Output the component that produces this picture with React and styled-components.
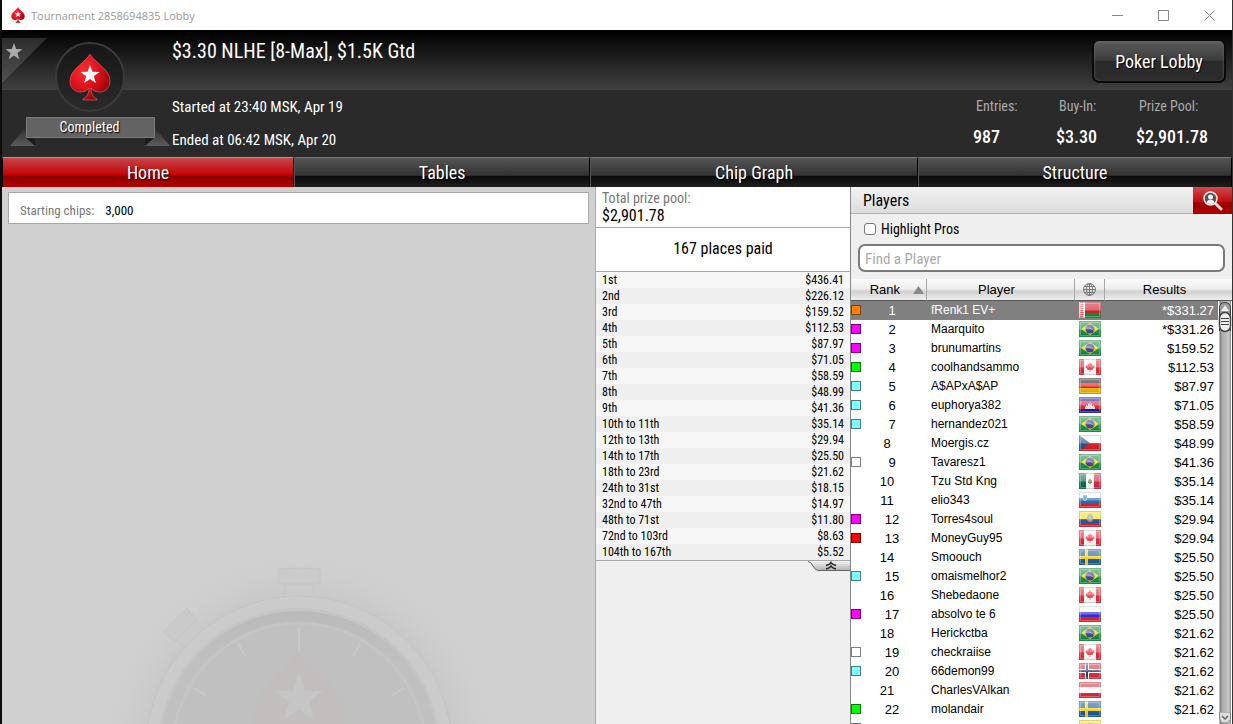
import React, { useState } from "react";
import styled, { createGlobalStyle } from "styled-components";

const prizes = [
  ["1st", "$436.41"],
  ["2nd", "$226.12"],
  ["3rd", "$159.52"],
  ["4th", "$112.53"],
  ["5th", "$87.97"],
  ["6th", "$71.05"],
  ["7th", "$58.59"],
  ["8th", "$48.99"],
  ["9th", "$41.36"],
  ["10th to 11th", "$35.14"],
  ["12th to 13th", "$29.94"],
  ["14th to 17th", "$25.50"],
  ["18th to 23rd", "$21.62"],
  ["24th to 31st", "$18.15"],
  ["32nd to 47th", "$14.97"],
  ["48th to 71st", "$11.80"],
  ["72nd to 103rd", "$8.63"],
  ["104th to 167th", "$5.52"],
];

const ORANGE = "#ff8000";
const PINK = "#ff00ff";
const GREEN = "#00ff00";
const CYAN = "#80ffff";
const RED = "#ff0000";
const WHITE = "#ffffff";

const players = [
  { rank: 1, name: "fRenk1 EV+", flag: "by", result: "*$331.27", tag: ORANGE },
  { rank: 2, name: "Maarquito", flag: "br", result: "*$331.26", tag: PINK },
  { rank: 3, name: "brunumartins", flag: "br", result: "$159.52", tag: PINK },
  { rank: 4, name: "coolhandsammo", flag: "ca", result: "$112.53", tag: GREEN },
  { rank: 5, name: "A$APxA$AP", flag: "de", result: "$87.97", tag: CYAN },
  { rank: 6, name: "euphorya382", flag: "kh", result: "$71.05", tag: CYAN },
  { rank: 7, name: "hernandez021", flag: "br", result: "$58.59", tag: CYAN },
  { rank: 8, name: "Moergis.cz", flag: "cz", result: "$48.99" },
  { rank: 9, name: "Tavaresz1", flag: "br", result: "$41.36", tag: WHITE },
  { rank: 10, name: "Tzu Std Kng", flag: "mx", result: "$35.14" },
  { rank: 11, name: "elio343", flag: "si", result: "$35.14" },
  { rank: 12, name: "Torres4soul", flag: "ec", result: "$29.94", tag: PINK },
  { rank: 13, name: "MoneyGuy95", flag: "ca", result: "$29.94", tag: RED },
  { rank: 14, name: "Smoouch", flag: "se", result: "$25.50" },
  { rank: 15, name: "omaismelhor2", flag: "br", result: "$25.50", tag: CYAN },
  { rank: 16, name: "Shebedaone", flag: "ca", result: "$25.50" },
  { rank: 17, name: "absolvo te 6", flag: "ru", result: "$25.50", tag: PINK },
  { rank: 18, name: "Herickctba", flag: "br", result: "$21.62" },
  { rank: 19, name: "checkraiise", flag: "ca", result: "$21.62", tag: WHITE },
  { rank: 20, name: "66demon99", flag: "no", result: "$21.62", tag: CYAN },
  { rank: 21, name: "CharlesVAlkan", flag: "at", result: "$21.62" },
  { rank: 22, name: "molandair", flag: "se", result: "$21.62", tag: GREEN },
  { rank: 23, flag: "ec", tag: CYAN },
];

const tabs = [
  { label: "Home", grow: 292 },
  { label: "Tables", grow: 296 },
  { label: "Chip Graph", grow: 328 },
  { label: "Structure", grow: 314 },
];

const stats = [
  { label: "Entries:", value: "987" },
  { label: "Buy-In:", value: "$3.30" },
  { label: "Prize Pool:", value: "$2,901.78" },
];

const STAR = "M0-10 2.4-3.2 9.5-3.1 3.8 1.2 5.9 8.1 0 4-5.9 8.1-3.8 1.2-9.5-3.1-2.4-3.2Z";

const flagArt = {
  by: (
    <>
      <path fill="#c81420" d="M0 0h22v11H0z" />
      <path fill="#0a8a20" d="M0 11h22v5H0z" />
      <path fill="#fff" d="M0 0h6v16H0z" />
      <path stroke="#e0505a" strokeWidth="3" strokeDasharray="1.5 .5" d="M2.5 0v16" />
      <path stroke="#f0a0a4" strokeWidth="1" strokeDasharray="1 1" d="M4.5 0v16" />
    </>
  ),
  br: (
    <>
      <path fill="#0a8a3c" d="M0 0h22v16H0z" />
      <path fill="#f5d20f" d="M11 2l9 6-9 6-9-6z" />
      <circle cx="11" cy="8" r="4.5" fill="#3c3c8c" />
      <path stroke="#8a8cc0" fill="none" d="M7 7q4-1 8 2.5" />
    </>
  ),
  ca: (
    <>
      <path fill="#fff" d="M0 0h22v16H0z" />
      <path fill="#e0202e" d="M0 0h5v16H0zM17 0h5v16h-5z" />
      <path
        fill="#f0303c"
        d="M11 3l1 2 1.500-.5-.3 2.300 2.300-.8-.5 1.500 1 .5-2.500 2 .3 1-2.500-.3V13h-.6v-2.300l-2.500.3.3-1L6 8l1-.5L6.500 6l2.300.8-.3-2.300L10 5Z"
      />
    </>
  ),
  de: (
    <>
      <path fill="#111" d="M0 0h22v5H0z" />
      <path fill="#e81414" d="M0 5h22v5H0z" />
      <path fill="#e8b400" d="M0 10h22v6H0z" />
    </>
  ),
  kh: (
    <>
      <path fill="#10109a" d="M0 0h22v16H0z" />
      <path fill="#de2030" d="M0 4h22v8H0z" />
      <path fill="#f8dce0" d="M6 12V9.500h1V8h1v1h1V6.500h1V8h.5V5.500h1V8h.5V6.500h1V9h1V8h1v1.500h1V12z" />
    </>
  ),
  cz: (
    <>
      <path fill="#fff" d="M0 0h22v8H0z" />
      <path fill="#d8141e" d="M0 8h22v8H0z" />
      <path fill="#1d4a80" d="M0 0l11 8-11 8z" />
    </>
  ),
  mx: (
    <>
      <path fill="#fff" d="M0 0h22v16H0z" />
      <path fill="#00684a" d="M0 0h7v16H0z" />
      <path fill="#cf1f38" d="M15 0h7v16h-7z" />
      <circle cx="11" cy="8" r="2" fill="#8f7b52" />
      <path stroke="#5a8a50" fill="none" d="M9 9q2 3 4 0" />
    </>
  ),
  si: (
    <>
      <path fill="#fff" d="M0 0h22v6H0z" />
      <path fill="#1765ad" d="M0 6h22v5H0z" />
      <path fill="#e2141e" d="M0 11h22v5H0z" />
      <path fill="#3c7fc0" stroke="#fff" strokeWidth=".5" d="M4 3h4v3q0 2-2 3-2-1-2-3z" />
    </>
  ),
  ec: (
    <>
      <path fill="#f5dc14" d="M0 0h22v8H0z" />
      <path fill="#1c4f9c" d="M0 8h22v4H0z" />
      <path fill="#dc1420" d="M0 12h22v4H0z" />
      <ellipse cx="11" cy="7" rx="3" ry="4" fill="#a09a70" />
      <circle cx="11" cy="7" r="1.5" fill="#7fc0d8" />
    </>
  ),
  se: (
    <>
      <path fill="#0f5796" d="M0 0h22v16H0z" />
      <path fill="#f7cc10" d="M6 0h3v16H6zM0 7h22v3H0z" />
    </>
  ),
  ru: (
    <>
      <path fill="#fff" d="M0 0h22v6H0z" />
      <path fill="#2020e0" d="M0 6h22v5H0z" />
      <path fill="#f01414" d="M0 11h22v5H0z" />
    </>
  ),
  no: (
    <>
      <path fill="#dd2434" d="M0 0h22v16H0z" />
      <path fill="#fff" d="M6 0h4v16H6zM0 6h22v4H0z" />
      <path fill="#1d3a6c" d="M7 0h2v16H7zM0 7h22v2H0z" />
    </>
  ),
  at: (
    <>
      <path fill="#dc2430" d="M0 0h22v16H0z" />
      <path fill="#fff" d="M0 5h22v6H0z" />
    </>
  ),
};

function Flag({ code }) {
  return (
    <FlagSvg viewBox="0 0 22 16">
      <defs>
        <linearGradient id="gloss" x2="0" y2="1">
          <stop offset="0" stopColor="#fff" stopOpacity=".5" />
          <stop offset=".5" stopColor="#fff" stopOpacity=".36" />
          <stop offset=".56" stopColor="#fff" stopOpacity=".06" />
          <stop offset="1" stopColor="#000" stopOpacity=".1" />
        </linearGradient>
      </defs>
      {flagArt[code]}
      <path fill="url(#gloss)" d="M0 0h22v16H0z" />
      <path fill="none" stroke="#fff" strokeOpacity=".28" d="M1.5 1.5h19v13h-19z" />
      <path fill="none" stroke="#888" strokeOpacity=".28" d="M.5.5h21v15H.5z" />
    </FlagSvg>
  );
}

function Spade({ width, height }) {
  return (
    <svg width={width} height={height} viewBox="0 0 42 48">
      <defs>
        <radialGradient id="spadeRed" cx=".35" cy=".35" r=".75">
          <stop offset="0" stopColor="#ff2c32" />
          <stop offset=".5" stopColor="#dc141e" />
          <stop offset="1" stopColor="#8c0008" />
        </radialGradient>
      </defs>
      <path
        fill="url(#spadeRed)"
        stroke="#f06a6a"
        strokeWidth=".6"
        d="M21 1C17 9 1 16 1 28c0 7 5 11 10 11 4 0 7-1 9-4 0 6-2 9-6 11v1h14v-1c-4-2-6-5-6-11 2 3 5 4 9 4 5 0 10-4 10-11C41 16 25 9 21 1Z"
      />
      <path fill="#fff" d={STAR} transform="translate(21 22)" />
    </svg>
  );
}

function StopWatch() {
  const ticks = [-60, -30, 0, 30, 60];
  return (
    <WatchSvg viewBox="98 534 400 190" aria-hidden="true">
      <defs>
        <radialGradient id="watchHalo" cx="298" cy="749" r="200" gradientUnits="userSpaceOnUse">
          <stop offset=".76" stopColor="#c8c8c8" />
          <stop offset="1" stopColor="#d0d0d0" stopOpacity="0" />
        </radialGradient>
        <linearGradient id="watchFace" x2="0" y2="1">
          <stop offset="0" stopColor="#bababa" />
          <stop offset=".2" stopColor="#c0c0c0" />
        </linearGradient>
      </defs>
      <circle cx="298" cy="749" r="200" fill="url(#watchHalo)" />
      <path fill="#cacaca" stroke="#c5c5c5" d="M284 584h28v13h-28zM277 569q21-2 42 0v15h-42z" />
      <path fill="#cacaca" stroke="#c5c5c5" d="M175 640l20-19 9 10-18 18zM162 632l24-24 9 11-21 23z" />
      <circle cx="298" cy="749" r="153" fill="#cbcbcb" stroke="#c4c4c4" />
      <circle cx="298" cy="749" r="141" fill="#c5c5c5" />
      <circle cx="298" cy="749" r="138" fill="url(#watchFace)" />
      <circle cx="298" cy="749" r="126" fill="#c0c0c0" stroke="#c4c4c4" strokeWidth="3" />
      {ticks.map((deg) => (
        <path
          key={deg}
          stroke="#c7c7c7"
          strokeWidth="2"
          d={deg === 0 ? "M298 627v24" : "M298 627v14"}
          transform={`rotate(${deg} 298 749)`}
        />
      ))}
      <path fill="#c1bebd" d="M298 651c-8 18-45 36-45 64v14h91v-14c0-28-37-46-46-64Z" />
      <path fill="#c5c5c5" d={STAR} transform="translate(298 699) scale(2.6)" />
    </WatchSvg>
  );
}

function App() {
  const [tab, setTab] = useState("Home");
  const [selected, setSelected] = useState(1);
  const [pros, setPros] = useState(false);
  const [query, setQuery] = useState("");

  return (
    <>
      <GlobalStyle />
      <Window>
        <TitleBar>
          <Spade width={14} height={16} />
          <WindowTitle>Tournament 2858694835 Lobby</WindowTitle>
          <WindowButton aria-label="Minimize">
            <svg width="11" height="11" stroke="#888" fill="none">
              <path d="M0 5.5h11" />
            </svg>
          </WindowButton>
          <WindowButton aria-label="Maximize">
            <svg width="11" height="11" stroke="#888" fill="none">
              <path d="M.5.5h10v10H.5z" />
            </svg>
          </WindowButton>
          <WindowButton aria-label="Close">
            <svg width="11" height="11" stroke="#888" fill="none">
              <path d="M.5.5l10 10M10.500.5l-10 10" />
            </svg>
          </WindowButton>
        </TitleBar>

        <Header>
          <Corner aria-label="Favourite">
            <svg width="46" height="46">
              <defs>
                <linearGradient id="corner" x2="0" y2="1">
                  <stop offset="0" stopColor="#2c2c2c" />
                  <stop offset="1" stopColor="#525252" />
                </linearGradient>
              </defs>
              <path fill="url(#corner)" d="M0 0h45L0 45z" />
              <path fill="#aaa" d={STAR} transform="translate(12 14) scale(.9)" />
            </svg>
          </Corner>
          <Badge>
            <Emblem>
              <Spade width={42} height={48} />
            </Emblem>
            <Ribbon>
              <RibbonSvg viewBox="0 0 162 30">
                <defs>
                  <linearGradient id="fold" x2="0" y2="1">
                    <stop offset="0" stopColor="#2b2b2b" />
                    <stop offset="1" stopColor="#5c5c5c" />
                  </linearGradient>
                </defs>
                <path fill="url(#fold)" d="M17 10v11h9v8H1zM145 10v11h-9v8h25z" />
                <path fill="#1c1c1c" d="M17 21h9v8zM145 21h-9v8z" />
                <path fill="#636363" stroke="#7c7c7c" d="M17.500.5h128v20h-128z" />
              </RibbonSvg>
              <RibbonText>Completed</RibbonText>
            </Ribbon>
          </Badge>
          <Info>
            <Title>$3.30 NLHE [8-Max], $1.5K Gtd</Title>
            <Time>Started at 23:40 MSK, Apr 19</Time>
            <Time>Ended at 06:42 MSK, Apr 20</Time>
          </Info>
          <HeaderSide>
            <LobbyButton>Poker Lobby</LobbyButton>
            <Stats>
              {stats.map((s) => (
                <Stat key={s.label}>
                  <dt>{s.label}</dt>
                  <dd>{s.value}</dd>
                </Stat>
              ))}
            </Stats>
          </HeaderSide>
        </Header>

        <TabBar>
          {tabs.map((t) => (
            <Tab key={t.label} $grow={t.grow} $active={tab === t.label} onClick={() => setTab(t.label)}>
              {t.label}
            </Tab>
          ))}
        </TabBar>

        <Content>
          <HomePanel>
            <ChipsBox>
              <span>Starting chips:</span>
              <b>3,000</b>
            </ChipsBox>
            <StopWatch />
          </HomePanel>

          <PrizePanel>
            <PrizeTotal>
              <span>Total prize pool:</span>
              <strong>$2,901.78</strong>
            </PrizeTotal>
            <PlacesPaid>167 places paid</PlacesPaid>
            <PrizeTable>
              <tbody>
                {prizes.map(([place, amount]) => (
                  <tr key={place}>
                    <td>{place}</td>
                    <td>{amount}</td>
                  </tr>
                ))}
              </tbody>
            </PrizeTable>
            <Collapse aria-label="Collapse prizes">
              <svg width="42" height="10">
                <defs>
                  <linearGradient id="collapse" x2="0" y2="1">
                    <stop offset="0" stopColor="#f4f4f4" />
                    <stop offset="1" stopColor="#b4b4b4" />
                  </linearGradient>
                </defs>
                <path fill="url(#collapse)" d="M0 0q3 0 5 5 2 4 5 4h32V0z" />
                <path fill="none" stroke="#666" d="M0 .5q3 0 5 4.500 2 4.500 5 4.500h32" />
                <path fill="none" stroke="#222" strokeWidth="1.5" d="M18 4.500q4-1 5-3 1 2 5 3M18 8q4-1 5-3 1 2 5 3" />
              </svg>
            </Collapse>
          </PrizePanel>

          <PlayersPanel>
            <PlayersHeader>
              <h2>Players</h2>
              <SearchButton aria-label="Search players">
                <svg width="20" height="20" viewBox="0 0 20 20">
                  <path stroke="#ddd" strokeWidth="3" strokeLinecap="round" d="M12.500 12.500l5.500 5.500" />
                  <circle cx="7.5" cy="7.5" r="6.5" fill="#555" stroke="#e8e8e8" strokeWidth="1.5" />
                  <circle cx="7.5" cy="6" r="2.5" fill="#eee" />
                  <path fill="#eee" d="M3.500 11.500q.5-2.500 4-3 3.500.5 4 3-4 3-8 0z" />
                </svg>
              </SearchButton>
            </PlayersHeader>
            <ProsLabel>
              <ProsCheck type="checkbox" checked={pros} onChange={(e) => setPros(e.target.checked)} />
              Highlight Pros
            </ProsLabel>
            <FindInput
              type="text"
              aria-label="Find a Player"
              placeholder="Find a Player"
              value={query}
              onChange={(e) => setQuery(e.target.value)}
            />
            <TableArea>
              <PlayerTable>
                <colgroup>
                  <RankCol />
                  <col />
                  <FlagCol />
                  <ResultCol />
                </colgroup>
                <thead>
                  <tr>
                    <th>
                      <RankHead>
                        Rank
                        <svg width="11" height="8">
                          <path fill="#888" d="M5.500 0L11 8H0z" />
                        </svg>
                      </RankHead>
                    </th>
                    <th>Player</th>
                    <th aria-label="Country">
                      <svg width="13" height="13" fill="none" stroke="#777">
                        <circle cx="6.5" cy="6.5" r="6" />
                        <ellipse cx="6.5" cy="6.5" rx="3" ry="6" />
                        <path d="M6.500 0v13M0 6.500h13M1.500 3.500h10M1.500 9.500h10" />
                      </svg>
                    </th>
                    <th>Results</th>
                  </tr>
                </thead>
                <tbody>
                  {players.map((p) => (
                    <PlayerRow key={p.rank} $selected={selected === p.rank} onClick={() => setSelected(p.rank)}>
                      <td>
                        <RankCell>
                          {p.tag && <Tag $color={p.tag} />}
                          <span>{p.name && p.rank}</span>
                        </RankCell>
                      </td>
                      <NameCell>{p.name}</NameCell>
                      <td>
                        <Flag code={p.flag} />
                      </td>
                      <ResultCell>{p.result}</ResultCell>
                    </PlayerRow>
                  ))}
                </tbody>
              </PlayerTable>
              <ScrollTrack>
                <svg width="14" height="32">
                  <path fill="#999" stroke="#444" d="M1.500 30V7q0-5.500 5.500-5.500T12.500 7v23" />
                  <path fill="#eee" d="M7 4l4 6H3z" />
                  <rect x="1.5" y="11.5" width="11" height="19" rx="5.5" fill="#eee" stroke="#444" strokeWidth="1.5" />
                  <path stroke="#444" d="M3 17.500h8M3 20.500h8M3 23.500h8" />
                </svg>
                <svg width="14" height="12">
                  <path fill="#ddd" stroke="#888" d="M1.500 0v5q0 6 5.500 6t5.500-6V0z" />
                  <path fill="none" stroke="#666" strokeWidth="1.5" d="M4 4l3 3 3-3" />
                </svg>
              </ScrollTrack>
            </TableArea>
          </PlayersPanel>
        </Content>
      </Window>
    </>
  );
}

const narrow = `"Liberation Sans Narrow", "Roboto Condensed", "Liberation Sans", sans-serif`;

const GlobalStyle = createGlobalStyle`
  * {
    box-sizing: border-box;
  }
  body {
    margin: 0;
    background: #2a2a2a;
    font-family: ${narrow};
  }
  button {
    border: 0;
    padding: 0;
    background: none;
    font-family: inherit;
    cursor: pointer;
  }
  svg {
    display: block;
    flex: none;
  }
`;
const Window = styled.div`
  display: flex;
  flex-direction: column;
  height: 100vh;
  overflow: hidden;
  border-left: 2px solid #0c0c0c;
  border-right: 1px solid #333;
`;
const TitleBar = styled.div`
  display: flex;
  align-items: center;
  flex: none;
  height: 30px;
  padding: 0 0 0 9px;
  background: #fff;
`;
const WindowTitle = styled.span`
  flex: 1;
  margin-left: 6px;
  font: 11px "Open Sans", sans-serif;
  color: #999;
`;
const WindowButton = styled.button`
  display: flex;
  align-items: center;
  justify-content: center;
  width: 46px;
  height: 28px;
`;
const Header = styled.header`
  position: relative;
  display: flex;
  flex: none;
  height: 127px;
  background: linear-gradient(#000, #404040) top / 100% 60px no-repeat #2a2a2a;
  color: #fff;
`;
const Corner = styled.button`
  position: absolute;
  top: 8px;
  left: 0;
`;
const Badge = styled.div`
  display: flex;
  flex-direction: column;
  align-items: center;
  flex: none;
  width: 170px;
  padding: 12px 0 0 5px;
`;
const Emblem = styled.div`
  display: flex;
  align-items: center;
  justify-content: center;
  width: 70px;
  height: 70px;
  border: 2px solid #3a3a3a;
  border-radius: 50%;
  background: linear-gradient(#161616, #2a2a2a);
`;
const Ribbon = styled.div`
  position: relative;
  width: 162px;
  height: 30px;
  margin-top: 5px;
`;
const RibbonSvg = styled.svg`
  position: absolute;
  inset: 0;
`;
const RibbonText = styled.span`
  position: relative;
  display: block;
  line-height: 21px;
  font-size: 14px;
  text-align: center;
  text-shadow: 1px 1px 1px #000;
`;
const Info = styled.div`
  flex: 1;
`;
const Title = styled.h1`
  margin: 8px 0 34px;
  font-size: 20px;
  line-height: 26px;
  font-weight: 400;
`;
const Time = styled.p`
  margin: 0 0 15px;
  font-size: 15px;
  line-height: 18px;
`;
const HeaderSide = styled.div`
  display: flex;
  flex-direction: column;
  align-items: flex-end;
  padding: 9px 6px 0 0;
`;
const LobbyButton = styled.button`
  width: 134px;
  height: 44px;
  border: 2px solid #0a0a0a;
  border-radius: 7px;
  background: linear-gradient(#5c5c5c, #3c3c3c 48%, #2a2a2a 50%, #2c2c2c);
  box-shadow: inset 0 1px 3px #666;
  color: #fff;
  font-size: 18px;
  text-shadow: 1px 1px 1px #000;
`;
const Stats = styled.dl`
  display: grid;
  grid-template-columns: 83px 80px 90px;
  margin: 14px 0 0;
`;
const Stat = styled.div`
  dt {
    margin-left: 3px;
    font-size: 14px;
    line-height: 18px;
    color: #aaa;
  }
  dd {
    margin: 10px 0 0;
    font-size: 18px;
    line-height: 24px;
    font-weight: 500;
  }
`;
const TabBar = styled.nav`
  display: flex;
  flex: none;
  height: 30px;
  background: #000;
`;
const Tab = styled.button`
  flex: ${(props) => props.$grow} 1 0;
  border-right: 1px solid #000;
  border-left: 1px solid ${(props) => (props.$active ? "#000" : "#555")};
  border-top: 1px solid ${(props) => (props.$active ? "#d88" : "#777")};
  background: ${(props) =>
    props.$active
      ? "linear-gradient(#c4474a, #c60000 60%, #8c0000 62%, #b40000)"
      : "linear-gradient(#555, #323232 60%, #0a0a0a 62%, #1e1e1e)"};
  color: #fff;
  font-size: 18px;
  line-height: 28px;
  text-shadow: 1px 1px 1px #000;
`;
const Content = styled.main`
  display: flex;
  flex: 1;
  min-height: 0;
  background: #efefef;
`;
const HomePanel = styled.section`
  position: relative;
  flex: 1;
  overflow: hidden;
  padding: 5px 6px;
  background: #d0d0d0;
`;
const ChipsBox = styled.div`
  display: flex;
  align-items: center;
  gap: 11px;
  height: 32px;
  padding: 4px 11px 0;
  border: 1px solid #a8a8a8;
  background: #fff;
  font-size: 13px;
  color: #777;
  b {
    font-weight: 400;
    color: #000;
  }
`;
/* large faint stopwatch behind the home tab */
const WatchSvg = styled.svg`
  position: absolute;
  bottom: 0;
  left: calc(50% - 200px);
  width: 400px;
  height: 190px;
`;
const PrizePanel = styled.section`
  flex: none;
  width: 256px;
  border-left: 1px solid #a8a8a8;
  border-right: 1px solid #888;
`;
const PrizeTotal = styled.div`
  display: flex;
  flex-direction: column;
  height: 40px;
  padding: 3px 6px 0;
  background: #fff;
  span {
    font-size: 14px;
    line-height: 17px;
    color: #777;
  }
  strong {
    font-size: 16px;
    line-height: 18px;
    font-weight: 400;
  }
`;
const PlacesPaid = styled.div`
  height: 45px;
  border: solid #a8a8a8;
  border-width: 1px 0;
  background: #fff;
  font-size: 16px;
  line-height: 42px;
  text-align: center;
`;
const PrizeTable = styled.table`
  width: 100%;
  border-bottom: 1px solid #a8a8a8;
  border-collapse: collapse;
  font-size: 12px;
  line-height: 16px;
  tr {
    background: #f7f7f7;
  }
  tr:nth-child(even) {
    background: #efefef;
  }
  td {
    padding: 0 6px;
  }
  td:last-child {
    text-align: right;
  }
`;
const Collapse = styled.button`
  display: block;
  margin-left: auto;
`;
const PlayersPanel = styled.section`
  display: flex;
  flex-direction: column;
  flex: none;
  width: 381px;
`;
const PlayersHeader = styled.div`
  display: flex;
  align-items: stretch;
  flex: none;
  height: 27px;
  border-bottom: 1px solid #b0b0b0;
  background: linear-gradient(#f2f2f2, #dcdcdc);
  h2 {
    flex: 1;
    margin: 0 0 0 12px;
    font-size: 16px;
    line-height: 27px;
    font-weight: 400;
  }
`;
const SearchButton = styled.button`
  display: flex;
  align-items: center;
  justify-content: center;
  width: 39px;
  height: 27px;
  background: linear-gradient(#d04a4e, #c40a0a 55%, #9c0000 58%, #b00000);
`;
const ProsLabel = styled.label`
  display: flex;
  align-items: center;
  gap: 5px;
  align-self: flex-start;
  height: 30px;
  margin-left: 13px;
  font-size: 14px;
`;
const ProsCheck = styled.input`
  appearance: none;
  width: 12px;
  height: 12px;
  margin: 0;
  border: 1px solid #777;
  border-radius: 3px;
  background: #fff;
  &:checked {
    background: #c40a0a;
  }
`;
const FindInput = styled.input`
  flex: none;
  height: 28px;
  margin: 0 7px 7px;
  padding: 1px 5px 0;
  border: 2px solid #7a7a7a;
  border-radius: 7px;
  background: #fff;
  font-family: inherit;
  font-size: 15px;
  &::placeholder {
    color: #aaa;
  }
`;
const TableArea = styled.div`
  position: relative;
  flex: 1;
  min-height: 0;
  overflow: hidden;
  background: #fff;
`;
const RankCol = styled.col`
  width: 76px;
`;
const FlagCol = styled.col`
  width: 30px;
`;
const ResultCol = styled.col`
  width: 127px;
`;
const PlayerTable = styled.table`
  width: 100%;
  table-layout: fixed;
  border-collapse: separate;
  border-spacing: 0;
  font-family: "Liberation Sans", sans-serif;
  font-size: 13px;
  line-height: 15px;
  th {
    height: 22px;
    padding: 0 8px 0 0;
    border-right: 1px solid #a8a8a8;
    border-bottom: 1px solid #555;
    background: linear-gradient(#fafafa, #eee 45%, #d2d2d2 60%, #eee);
    font-weight: 400;
  }
  th:first-child,
  th:nth-child(3) {
    padding: 0;
  }
  th:last-child {
    border-right: 0;
  }
  th > svg {
    margin: 0 auto;
  }
  td {
    height: 19px;
    padding: 0;
  }
  td > svg {
    margin: 0 auto 1px;
  }
`;
const RankHead = styled.div`
  display: flex;
  align-items: center;
  justify-content: flex-end;
  gap: 13px;
  padding-right: 2px;
`;
const PlayerRow = styled.tr`
  background: ${(props) => (props.$selected ? "#808080" : "#fff")};
  color: ${(props) => (props.$selected ? "#fff" : "#000")};
`;
const RankCell = styled.div`
  display: flex;
  align-items: center;
  padding-right: 4px;
  span {
    flex: 1;
    text-align: center;
  }
`;
const Tag = styled.i`
  width: 10px;
  height: 10px;
  margin-bottom: 1px;
  border: 1px solid rgba(0, 0, 0, 0.5);
  background: ${(props) => props.$color};
`;
const TextCell = styled.td`
  white-space: nowrap;
`;
const NameCell = styled(TextCell)`
  font-size: 12px;
  && {
    padding-left: 4px;
  }
`;
const ResultCell = styled(TextCell)`
  && {
    padding-right: 18px;
  }
  text-align: right;
`;
const FlagSvg = styled.svg`
  width: 22px;
  height: 16px;
`;
/* drawn over the right edge of the list, below its header */
const ScrollTrack = styled.div`
  position: absolute;
  top: 22px;
  right: 0;
  bottom: 0;
  display: flex;
  flex-direction: column;
  justify-content: space-between;
  width: 14px;
  background: linear-gradient(to right, #fff 1px, #777 2px, #aaa 4px, #c8c8c8 11px, #888 13px, #fff 13px);
`;

export default App;
